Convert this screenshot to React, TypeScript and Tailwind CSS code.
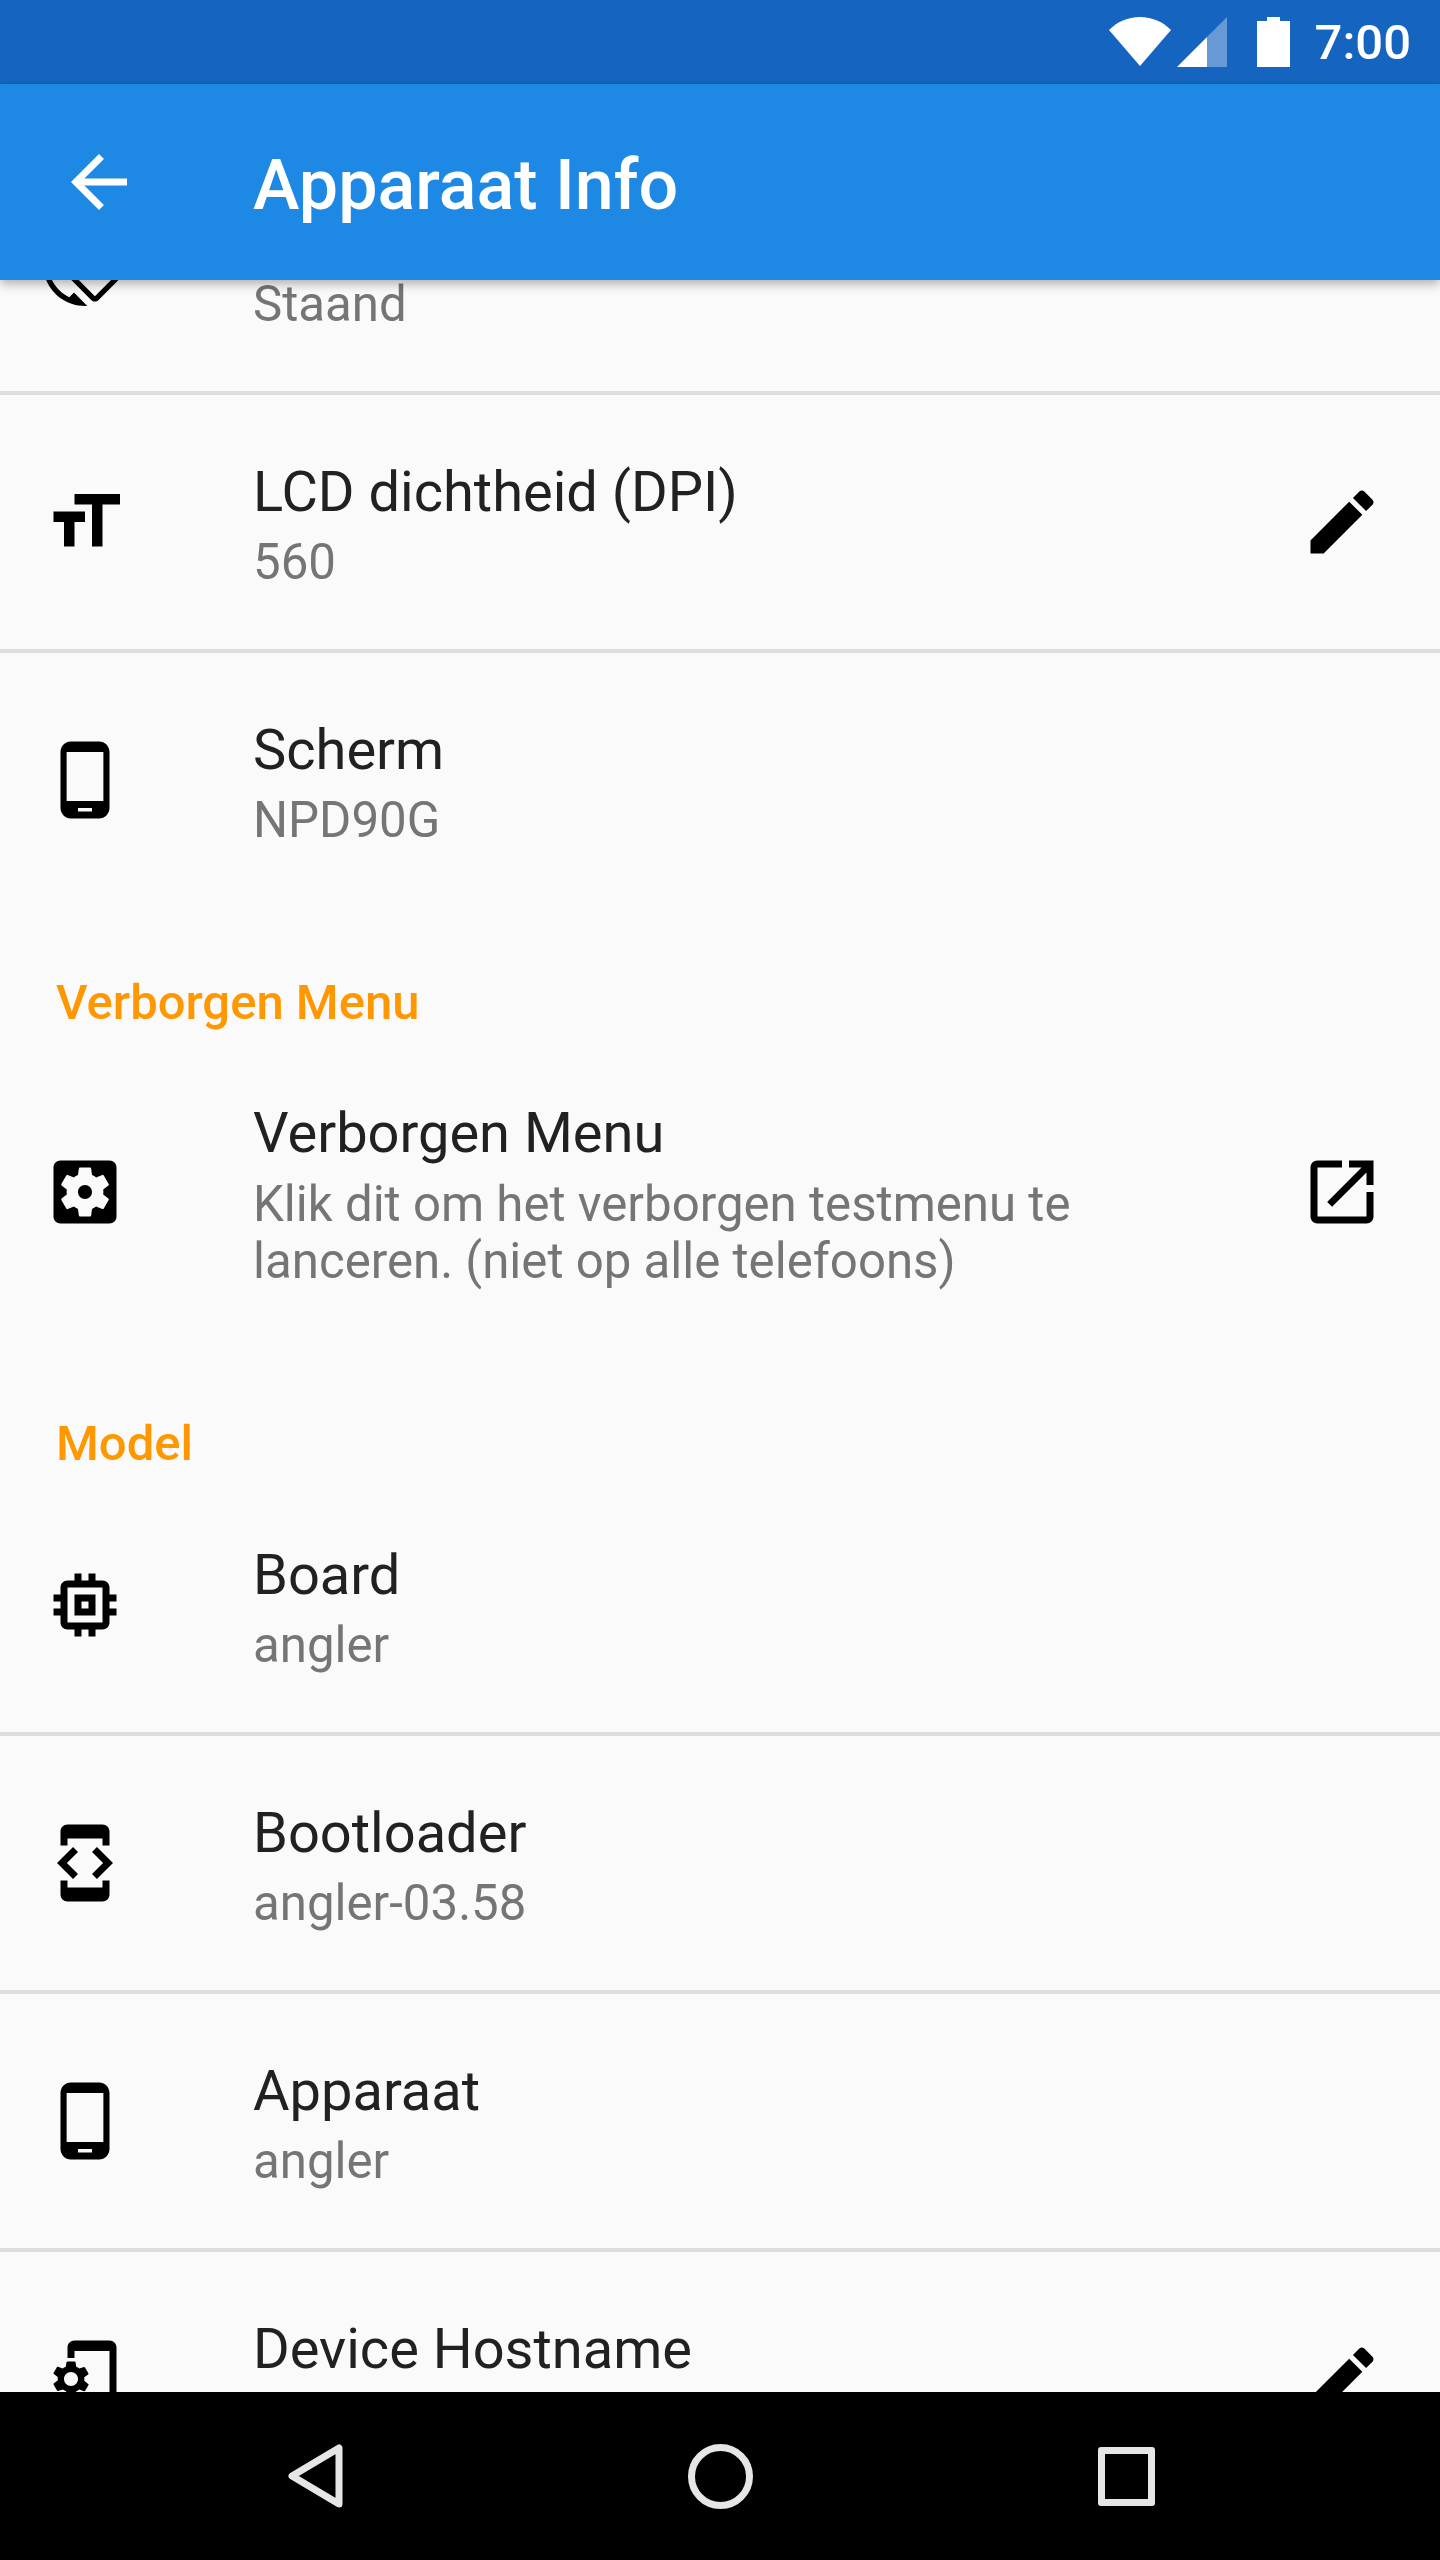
const paths = {
  rotation:
    'M16.48 2.52c3.27 1.55 5.61 4.72 5.97 8.48h1.5C23.44 4.84 18.29 0 12 0l-.66.03 3.81 3.81 1.33-1.32zm-6.25-.77c-.59-.59-1.54-.59-2.12 0L1.75 8.11c-.59.59-.59 1.54 0 2.12l12.02 12.02c.59.59 1.54.59 2.12 0l6.36-6.36c.59-.59.59-1.54 0-2.12L10.23 1.75zm4.6 19.44L2.81 9.17l6.36-6.36 12.02 12.02-6.36 6.36zm-7.31.29C4.25 19.94 1.91 16.76 1.55 13H.05C.56 19.16 5.71 24 12 24l.66-.03-3.81-3.81-1.33 1.32z',
  size: 'M9 4v3h5v12h3V7h5V4H9zm-6 8h3v7h3v-7h3V9H3v3z',
  edit: 'M3 17.25V21h3.75L17.81 9.94l-3.75-3.75L3 17.25zM20.71 7.04c.39-.39.39-1.02 0-1.41l-2.34-2.34c-.39-.39-1.02-.39-1.41 0l-1.83 1.83 3.75 3.75 1.83-1.83z',
  phone:
    'M16 1H8C6.34 1 5 2.34 5 4v16c0 1.66 1.34 3 3 3h8c1.66 0 3-1.34 3-3V4c0-1.66-1.34-3-3-3zm-2 20h-4v-1h4v1zm3.25-3H6.75V4h10.5v14z',
  open: 'M19 19H5V5h7V3H5c-1.11 0-2 .9-2 2v14c0 1.1.89 2 2 2h14c1.1 0 2-.9 2-2v-7h-2v7zM14 3v2h3.59l-9.83 9.83 1.41 1.41L19 6.41V10h2V3h-7z',
  gear: 'M12 10c-1.1 0-2 .9-2 2s.9 2 2 2 2-.9 2-2-.9-2-2-2zm7-7H5c-1.11 0-2 .9-2 2v14c0 1.1.89 2 2 2h14c1.11 0 2-.9 2-2V5c0-1.1-.89-2-2-2zm-1.75 9c0 .23-.02.46-.05.68l1.48 1.16c.13.11.17.3.08.45l-1.4 2.42c-.09.15-.27.21-.43.15l-1.74-.7c-.36.28-.76.51-1.18.69l-.26 1.85c-.03.17-.18.3-.35.3h-2.8c-.17 0-.32-.13-.35-.29l-.26-1.85c-.43-.18-.82-.41-1.18-.69l-1.74.7c-.16.06-.34 0-.43-.15l-1.4-2.42c-.09-.15-.05-.34.08-.45l1.48-1.16c-.03-.23-.05-.46-.05-.69 0-.23.02-.46.05-.68l-1.48-1.16c-.13-.11-.17-.3-.08-.45l1.4-2.42c.09-.15.27-.21.43-.15l1.74.7c.36-.28.76-.51 1.18-.69l.26-1.85c.03-.17.18-.3.35-.3h2.8c.17 0 .32.13.35.29l.26 1.85c.43.18.82.41 1.18.69l1.74-.7c.16-.06.34 0 .43.15l1.4 2.42c.09.15.05.34-.08.45l-1.48 1.16c.03.23.05.46.05.69z',
  memory:
    'M15 9H9v6h6V9zm-2 4h-2v-2h2v2zm8-2V9h-2V7c0-1.1-.9-2-2-2h-2V3h-2v2h-2V3H9v2H7c-1.1 0-2 .9-2 2v2H3v2h2v2H3v2h2v2c0 1.1.9 2 2 2h2v2h2v-2h2v2h2v-2h2c1.1 0 2-.9 2-2v-2h2v-2h-2v-2h2zm-4 6H7V7h10v10z',
  dev: 'M7 5h10v2h2V3c0-1.1-.9-1.99-2-1.99L7 1c-1.1 0-2 .9-2 2v4h2V5zm8.41 11.59L20 12l-4.59-4.59L14 8.83 17.17 12 14 15.17l1.41 1.42zM10 15.17L6.83 12 10 8.83 8.59 7.41 4 12l4.59 4.59L10 15.17zM17 19H7v-2H5v4c0 1.1.9 2 2 2h10c1.1 0 2-.9 2-2v-4h-2v2z',
  setup:
    'M11.8 12.5v-1l1.1-.8c.1-.1.1-.2.1-.3l-1-1.7c-.1-.1-.2-.2-.3-.1l-1.3.4c-.3-.2-.6-.4-.9-.5l-.2-1.3c0-.1-.1-.2-.3-.2H7c-.1 0-.2.1-.3.2l-.2 1.3c-.3.1-.6.3-.9.5l-1.3-.5c-.1 0-.2 0-.3.1l-1 1.7c-.1.1 0 .2.1.3l1.1.8v1l-1.1.8c-.1.2-.1.3-.1.4l1 1.7c.1.1.2.2.3.1l1.4-.4c.3.2.6.4.9.5l.2 1.3c-.1.1.1.2.2.2h2c.1 0 .2-.1.3-.2l.2-1.3c.3-.1.6-.3.9-.5l1.3.5c.1 0 .2 0 .3-.1l1-1.7c.1-.1 0-.2-.1-.3l-1.1-.9zM8 14c-1.1 0-2-.9-2-2s.9-2 2-2 2 .9 2 2-.9 2-2 2zM19 1H9c-1.1 0-2 .9-2 2v3h2V4h10v16H9v-2H7v3c0 1.1.9 2 2 2h10c1.1 0 2-.9 2-2V3c0-1.1-.9-2-2-2z',
  back: 'M20 11H7.83l5.59-5.59L12 4l-8 8 8 8 1.41-1.41L7.83 13H20v-2z',
};

const Icon = ({ d, color = 'text-black' }: { d: string; color?: string }) => (
  <svg viewBox="0 0 24 24" className={`w-[84px] h-[84px] shrink-0 fill-current ${color}`}>
    <path d={d} />
  </svg>
);

type RowProps = {
  icon: string;
  title: string;
  sub: string[];
  action?: string;
  divider?: boolean;
  tall?: boolean;
};

const Row = ({ icon, title, sub, action, divider, tall }: RowProps) => (
  <div
    className={`flex items-center pl-[43px] pr-[56px] ${tall ? 'h-[315px] pb-[5px]' : 'h-[258px]'} ${
      divider ? 'border-b-[4px] border-[#dedede]' : tall ? '' : 'pb-[4px]'
    }`}
  >
    <Icon d={icon} />
    <div className={`ml-[126px] flex-1 min-w-0 ${tall ? 'pt-[6px]' : 'pt-[5px]'}`}>
      <div className="text-[56px] leading-[66px] text-[#212121]">{title}</div>
      <div className={`${tall ? 'mt-[10px]' : 'mt-[9px]'} text-[49.2px] leading-[57px] text-[#757575]`}>
        {sub.map((line) => (
          <div key={line}>{line}</div>
        ))}
      </div>
    </div>
    {action && <Icon d={action} />}
  </div>
);

const SectionHeader = ({ label }: { label: string }) => (
  <div className="pl-[56px] pt-[64px] pb-[6px] text-[49px] leading-[56px] font-medium text-[#ff9800]">{label}</div>
);

export default function App() {
  return (
    <div className="w-[1440px] h-[2560px] flex flex-col overflow-hidden bg-[#fafafa] font-['Roboto',sans-serif]">
      <div className="h-[84px] shrink-0 flex items-center justify-end bg-[#1565c0] text-white">
        <svg viewBox="0 0 62 50" className="w-[62px] h-[50px] fill-white">
          <path d="M31 49 0 13C8 5 19 0 31 0s23 5 31 13z" />
        </svg>
        <svg viewBox="0 0 50 50" className="ml-[6px] w-[50px] h-[50px]">
          <path d="M50 0v50H30V20z" fill="#ffffff" fillOpacity="0.35" />
          <path d="M30 20v30H0z" fill="#ffffff" />
        </svg>
        <svg viewBox="0 0 33 50" className="ml-[30px] w-[33px] h-[50px] fill-white">
          <path d="M10 0h13v4h10v46H0V4h10z" />
        </svg>
        <div className="ml-[25px] mr-[29px] text-[49px] leading-[57px] font-medium">7:00</div>
      </div>

      <div className="relative z-10 h-[196px] shrink-0 flex items-center bg-[#1e88e5] text-white shadow-[0_4px_10px_rgba(0,0,0,0.3)]">
        <div className="ml-[57px]">
          <Icon d={paths.back} color="text-white" />
        </div>
        <div className="ml-[112px] mt-[6px] text-[70px] leading-[82px] font-medium">Apparaat Info</div>
      </div>

      <div className="flex-1 min-h-0 overflow-hidden">
        <div className="-mt-[143px]">
          <Row icon={paths.rotation} title="Schermoriëntatie" sub={['Staand']} divider />
          <Row icon={paths.size} title="LCD dichtheid (DPI)" sub={['560']} action={paths.edit} divider />
          <Row icon={paths.phone} title="Scherm" sub={['NPD90G']} />
          <SectionHeader label="Verborgen Menu" />
          <Row
            icon={paths.gear}
            title="Verborgen Menu"
            sub={['Klik dit om het verborgen testmenu te', 'lanceren. (niet op alle telefoons)']}
            action={paths.open}
            tall
          />
          <SectionHeader label="Model" />
          <Row icon={paths.memory} title="Board" sub={['angler']} divider />
          <Row icon={paths.dev} title="Bootloader" sub={['angler-03.58']} divider />
          <Row icon={paths.phone} title="Apparaat" sub={['angler']} divider />
          <Row icon={paths.setup} title="Device Hostname" sub={['angler']} action={paths.edit} />
        </div>
      </div>

      <div className="h-[168px] shrink-0 flex items-center justify-center gap-[345px] pl-[3px] bg-black">
        <svg viewBox="0 0 55 66" className="w-[55px] h-[66px] fill-none stroke-[#e6e6e6] stroke-[7px]">
          <path d="M51 5v56L4 33z" strokeLinejoin="round" />
        </svg>
        <div className="w-[65px] h-[65px] rounded-full border-[7px] border-[#e6e6e6]"></div>
        <div className="w-[57px] h-[59px] rounded-[3px] border-[7px] border-[#e6e6e6]"></div>
      </div>
    </div>
  );
}
